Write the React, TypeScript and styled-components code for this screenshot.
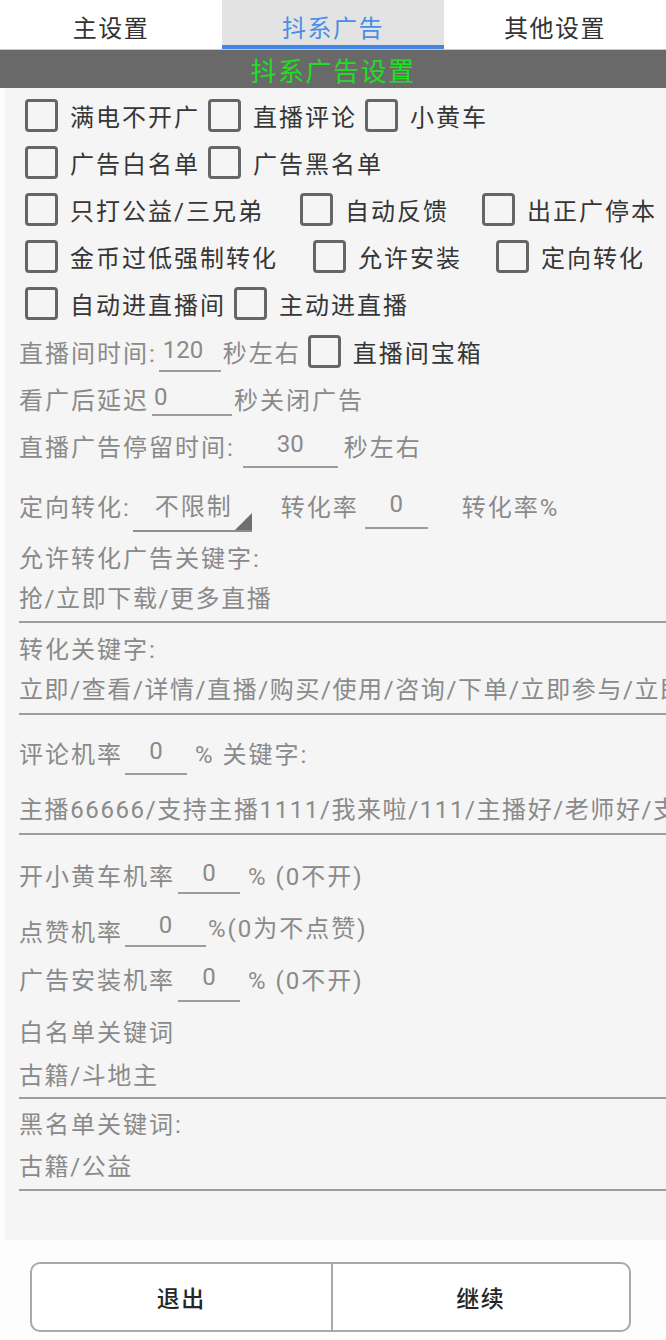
import React from "react";
import styled, { createGlobalStyle } from "styled-components";

const Global = createGlobalStyle`
  html, body { margin: 0; padding: 0; background: #fdfdfd; }
  body { font-family: Roboto, "Noto Sans CJK SC", "Noto Sans", sans-serif; }
  * { box-sizing: border-box; }
`;

const Page = styled.div`
  width: 666px;
  height: 1340px;
  background: #fdfdfd;
  overflow: hidden;
  display: flex;
  flex-direction: column;
`;

const TabBar = styled.div`
  display: grid;
  grid-template-columns: repeat(3, 1fr);
  height: 50px;
  background: #ffffff;
  border-bottom: 1px solid #c8c8c8;
`;

const Tab = styled.div<{ $active?: boolean }>`
  display: flex;
  align-items: center;
  justify-content: center;
  font-size: 24px;
  letter-spacing: 1.5px;
  padding-top: 8px;
  color: ${(p) => (p.$active ? "#4a8de6" : "#333333")};
  background: ${(p) => (p.$active ? "#e3e3e3" : "transparent")};
  border-bottom: 4px solid ${(p) => (p.$active ? "#3f86e6" : "transparent")};
`;

const TitleBar = styled.div`
  height: 38px;
  background: #696969;
  color: #22de22;
  font-size: 26px;
  letter-spacing: 1.5px;
  display: flex;
  align-items: center;
  justify-content: center;
`;

const Content = styled.div`
  margin-left: 5px;
  background: #f5f5f5;
  padding: 4px 0 49px 0;
  overflow: hidden;
`;

const CheckRow = styled.div`
  display: flex;
  align-items: center;
  height: 47px;
  padding-left: 20px;
`;

const CheckItem = styled.div<{ $w?: number }>`
  display: flex;
  align-items: center;
  flex: none;
  ${(p) => (p.$w ? `width: ${p.$w}px;` : `margin-right: 8px;`)}
`;

const Box = styled.span<{ $ml?: number }>`
  width: 33px;
  height: 33px;
  border: 3px solid #666666;
  border-radius: 4px;
  flex: none;
  margin-left: ${(p) => p.$ml ?? 0}px;
`;

const CheckLabel = styled.span`
  margin-left: 12px;
  font-size: 24px;
  letter-spacing: 2px;
  color: #363636;
  white-space: nowrap;
`;

const FormRow = styled.div<{ $h: number; $pt?: number }>`
  display: flex;
  align-items: center;
  height: ${(p) => p.$h}px;
  padding-top: ${(p) => p.$pt ?? 0}px;
  padding-left: 14px;
  white-space: nowrap;
`;

const Text = styled.span<{ $ml?: number; $dy?: number }>`
  font-size: 24px;
  letter-spacing: 2px;
  color: #8a8a8a;
  margin-left: ${(p) => p.$ml ?? 0}px;
  position: relative;
  top: ${(p) => p.$dy ?? 0}px;
  flex: none;
`;

const Input = styled.div<{ $w: number; $h: number; $ml?: number; $center?: boolean; $pl?: number }>`
  width: ${(p) => p.$w}px;
  height: ${(p) => p.$h}px;
  margin-left: ${(p) => p.$ml ?? 0}px;
  padding-left: ${(p) => p.$pl ?? 0}px;
  display: flex;
  align-items: center;
  justify-content: ${(p) => (p.$center ? "center" : "flex-start")};
  border-bottom: 2px solid #9c9c9c;
  font-size: 24px;
  color: #8a8a8a;
  flex: none;
`;

const Spinner = styled.div`
  position: relative;
  width: 119px;
  height: 54px;
  margin-left: 2px;
  padding-left: 22px;
  display: flex;
  align-items: center;
  border-bottom: 2px solid #8e8e8e;
  font-size: 24px;
  letter-spacing: 2px;
  color: #8a8a8a;
  flex: none;
  &::after {
    content: "";
    position: absolute;
    right: 0;
    bottom: 0;
    width: 0;
    height: 0;
    border-left: 17px solid transparent;
    border-bottom: 17px solid #6f6f6f;
  }
`;

const FieldLabel = styled.div<{ $h: number }>`
  height: ${(p) => p.$h}px;
  display: flex;
  align-items: center;
  padding-left: 14px;
  font-size: 24px;
  letter-spacing: 2px;
  color: #8a8a8a;
  white-space: nowrap;
`;

const EditLine = styled.div<{ $h: number; $pb?: number }>`
  height: ${(p) => p.$h}px;
  padding-bottom: ${(p) => p.$pb ?? 0}px;
  margin-left: 14px;
  margin-right: -20px;
  display: flex;
  align-items: center;
  border-bottom: 2px solid #9c9c9c;
  font-size: 24px;
  letter-spacing: 1.6px;
  color: #8a8a8a;
  white-space: nowrap;
  overflow: hidden;
`;

const Footer = styled.div`
  margin: 22px 35px 0 30px;
  height: 70px;
  display: grid;
  grid-template-columns: 1fr 1fr;
  border: 2px solid #a9a9a9;
  border-radius: 10px;
  background: #ffffff;
  overflow: hidden;
`;

const FooterButton = styled.div<{ $divider?: boolean }>`
  display: flex;
  align-items: center;
  justify-content: center;
  font-size: 23px;
  letter-spacing: 1.5px;
  color: #262626;
  font-weight: 500;
  border-left: ${(p) => (p.$divider ? "2px solid #a9a9a9" : "none")};
`;

const Check: React.FC<{ label: string; w?: number }> = ({ label, w }) => (
  <CheckItem $w={w}>
    <Box />
    <CheckLabel>{label}</CheckLabel>
  </CheckItem>
);

export default function App() {
  return (
    <>
      <Global />
      <Page>
        <TabBar>
          <Tab>主设置</Tab>
          <Tab $active>抖系广告</Tab>
          <Tab>其他设置</Tab>
        </TabBar>
        <TitleBar>抖系广告设置</TitleBar>
        <Content>
          <CheckRow>
            <Check label="满电不开广" />
            <Check label="直播评论" />
            <Check label="小黄车" />
          </CheckRow>
          <CheckRow>
            <Check label="广告白名单" />
            <Check label="广告黑名单" />
          </CheckRow>
          <CheckRow>
            <Check label="只打公益/三兄弟" w={275} />
            <Check label="自动反馈" w={182} />
            <Check label="出正广停本" />
          </CheckRow>
          <CheckRow>
            <Check label="金币过低强制转化" w={288} />
            <Check label="允许安装" w={183} />
            <Check label="定向转化" />
          </CheckRow>
          <CheckRow>
            <Check label="自动进直播间" />
            <Check label="主动进直播" />
          </CheckRow>

          <FormRow $h={48}>
            <Text>直播间时间:</Text>
            <Input $w={62} $h={42} $ml={2} $pl={4}>120</Input>
            <Text $ml={2}>秒左右</Text>
            <Box $ml={7} />
            <CheckLabel>直播间宝箱</CheckLabel>
          </FormRow>
          <FormRow $h={46}>
            <Text>看广后延迟</Text>
            <Input $w={80} $h={36} $ml={3} $pl={2}>0</Input>
            <Text $ml={2}>秒关闭广告</Text>
          </FormRow>
          <FormRow $h={48}>
            <Text>直播广告停留时间:</Text>
            <Input $w={95} $h={46} $ml={8} $center>30</Input>
            <Text $ml={6}>秒左右</Text>
          </FormRow>
          <FormRow $h={72}>
            <Text>定向转化:</Text>
            <Spinner>不限制</Spinner>
            <Text $ml={29}>转化率</Text>
            <Input $w={63} $h={48} $ml={6} $center>0</Input>
            <Text $ml={34}>转化率%</Text>
          </FormRow>

          <FieldLabel $h={30}>允许转化广告关键字:</FieldLabel>
          <EditLine $h={52}>抢/立即下载/更多直播</EditLine>
          <FieldLabel $h={48}>转化关键字:</FieldLabel>
          <EditLine $h={44} $pb={10}>
            立即/查看/详情/直播/购买/使用/咨询/下单/立即参与/立即购买/了解更多
          </EditLine>

          <FormRow $h={66} $pt={8}>
            <Text>评论机率</Text>
            <Input $w={62} $h={46} $ml={2} $center>0</Input>
            <Text $ml={8}>% 关键字:</Text>
          </FormRow>
          <EditLine $h={54}>
            主播66666/支持主播1111/我来啦/111/主播好/老师好/支持支持
          </EditLine>

          <FormRow $h={66} $pt={12}>
            <Text>开小黄车机率</Text>
            <Input $w={62} $h={40} $ml={3} $center>0</Input>
            <Text $ml={8}>% (0不开)</Text>
          </FormRow>
          <FormRow $h={50}>
            <Text $dy={4}>点赞机率</Text>
            <Input $w={81} $h={42} $ml={2} $center>0</Input>
            <Text $ml={2}>%(0为不点赞)</Text>
          </FormRow>
          <FormRow $h={54}>
            <Text>广告安装机率</Text>
            <Input $w={62} $h={48} $ml={3} $center>0</Input>
            <Text $ml={8}>% (0不开)</Text>
          </FormRow>

          <FieldLabel $h={50}>白名单关键词</FieldLabel>
          <EditLine $h={44} $pb={6}>古籍/斗地主</EditLine>
          <FieldLabel $h={46}>黑名单关键词:</FieldLabel>
          <EditLine $h={46} $pb={6}>古籍/公益</EditLine>
        </Content>
        <Footer>
          <FooterButton>退出</FooterButton>
          <FooterButton $divider>继续</FooterButton>
        </Footer>
      </Page>
    </>
  );
}
